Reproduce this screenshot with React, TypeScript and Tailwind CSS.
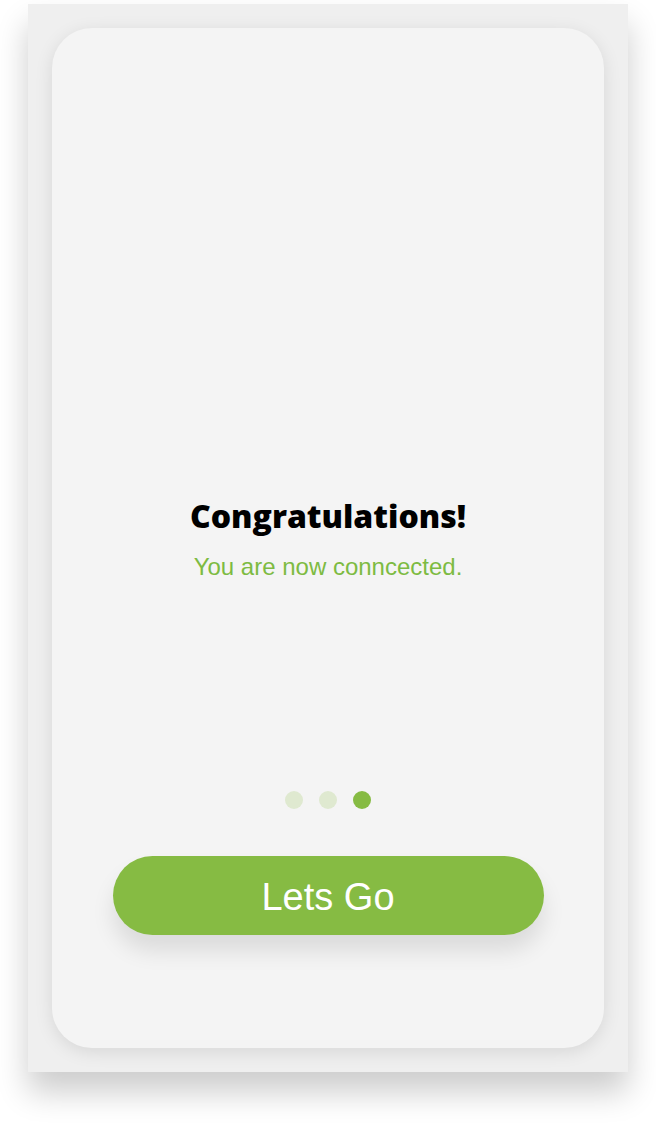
export default function App() {
  return (
    <div className="w-[656px] h-[1124px] bg-white pt-[4px] pl-[28px]">
      <div className="w-[600px] h-[1068px] bg-[#efefef] p-[24px] shadow-[0_20px_30px_rgba(0,0,0,0.2)]">
        <div className="w-[552px] h-[1020px] rounded-[40px] bg-[#f4f4f4] shadow-[0_4px_18px_rgba(0,0,0,0.1)] flex flex-col items-center pt-[466px]">
          <h1 className="font-['Open_Sans',sans-serif] font-extrabold text-[32px] leading-[44px] text-black">
            Congratulations!
          </h1>
          <p className="mt-[13px] font-['Liberation_Sans',Arial,sans-serif] text-[24px] leading-[32px] text-[#7dbb42]">
            You are now conncected.
          </p>
          <div className="mt-[208px] flex gap-[16px]">
            <span className="w-[18px] h-[18px] rounded-full bg-[#dfe9d0]" />
            <span className="w-[18px] h-[18px] rounded-full bg-[#dfe9d0]" />
            <span className="w-[18px] h-[18px] rounded-full bg-[#86bb43]" />
          </div>
          <button className="mt-[47px] w-[431px] h-[79px] pt-[3px] rounded-full bg-[#86bb43] text-white font-['Liberation_Sans',Arial,sans-serif] text-[38px] leading-none shadow-[0_16px_22px_rgba(0,0,0,0.1)] flex items-center justify-center">
            Lets Go
          </button>
        </div>
      </div>
    </div>
  );
}
